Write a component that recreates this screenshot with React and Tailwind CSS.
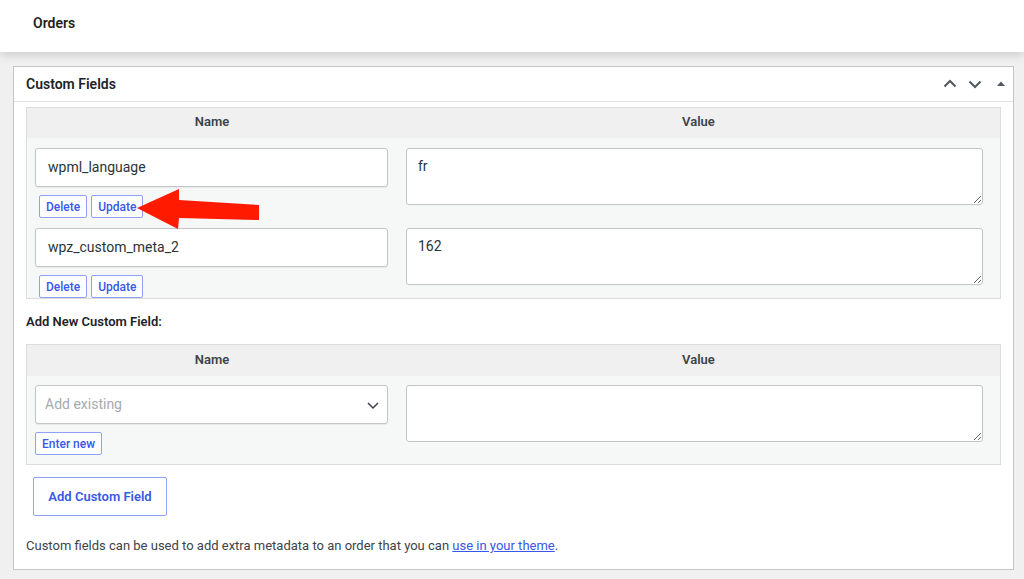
import React from "react";

function Btn({ children, className = "" }) {
  return (
    <button
      className={
        "h-[23px] px-[6px] rounded-[2px] border border-[#8fa0f5] bg-white text-[12px] font-medium text-[#3858e9] leading-none " +
        className
      }
    >
      {children}
    </button>
  );
}

function Chevron({ up }) {
  return (
    <svg width="16" height="16" viewBox="0 0 16 16" fill="none">
      <path
        d={up ? "M2.5 10.5 L8 5 L13.5 10.5" : "M2.5 5.5 L8 11 L13.5 5.5"}
        stroke="#50575e"
        strokeWidth="2"
      />
    </svg>
  );
}

function Row({ name, value }) {
  return (
    <div className="flex pt-[10px]">
      <div className="w-[370px] pl-[8px] pr-[9px] flex flex-col gap-[8px]">
        <div className="h-[39px] border border-[#c3c4c7] rounded-[3px] bg-white shadow-[0_1px_1px_rgba(0,0,0,0.06)] flex items-center pl-[12px] text-[14px] text-[#2c3338]">
          {name}
        </div>
        <div className="flex gap-[4px] pl-[4px]">
          <Btn>Delete</Btn>
          <Btn>Update</Btn>
        </div>
      </div>
      <div className="flex-1 pl-[9px] pr-[17px]">
        <textarea
          readOnly
          defaultValue={value}
          className="block w-full h-[57px] border border-[#c3c4c7] rounded-[3px] bg-white px-[11px] pt-[7px] text-[14px] text-[#2c3338] outline-none"
        />
      </div>
    </div>
  );
}

function TableHead({ tall }) {
  return (
    <div
      className={
        "flex bg-[#f0f0f1] items-center pb-[2px] text-[13px] font-semibold text-[#3c434a] " +
        (tall ? "h-[31px]" : "h-[30px]")
      }
    >
      <div className="w-[370px] text-center">Name</div>
      <div className="flex-1 text-center">Value</div>
    </div>
  );
}

export default function App() {
  return (
    <div
      className="w-[1024px] h-[579px] bg-[#f0f0f1] overflow-hidden"
      style={{ fontFamily: "Roboto, 'Liberation Sans', sans-serif" }}
    >
      <div className="h-[52px] bg-white flex items-center pl-[33px] shadow-[0_2px_10px_rgba(0,0,0,0.18)] relative">
        <span className="text-[14px] font-semibold text-[#1e1e1e] -mt-[6px]">Orders</span>
      </div>
      <div className="ml-[13px] mt-[14px] w-[1001px] h-[504px] bg-white border border-[#c3c4c7] flex flex-col">
        <div className="h-[35px] border-b border-[#e0e0e0] flex items-center pl-[12px] pr-[4px]">
          <span className="text-[14px] font-semibold text-[#1d2327]">Custom Fields</span>
          <div className="ml-auto flex items-center gap-[9px]">
            <Chevron up />
            <Chevron />
            <svg width="16" height="16" viewBox="0 0 16 16" className="ml-[1px]">
              <path d="M4 10 L8 5.5 L12 10 Z" fill="#50575e" />
            </svg>
          </div>
        </div>
        <div className="px-[12px] pt-[5px]">
          <div className="relative border border-[#dcdcde] bg-[#f6f7f7]">
            <TableHead />
            <Row name="wpml_language" value="fr" />
            <Row name="wpz_custom_meta_2" value="162" />
            <svg
              className="absolute left-[110px] top-[81px]"
              width="125"
              height="42"
              viewBox="0 0 125 42"
            >
              <polygon
                points="0,19 42,0 42,11 122,16 122,31 42,29 41,40"
                fill="#ff1a00"
              />
            </svg>
          </div>
          <div className="mt-[15px] text-[13px] font-semibold text-[#1d2327] leading-[16px]">
            Add New Custom Field:
          </div>
          <div className="mt-[14px] border border-[#dcdcde] bg-[#f6f7f7] pb-[9px]">
            <TableHead tall />
            <div className="flex pt-[9px]">
              <div className="w-[370px] pl-[8px] pr-[9px] flex flex-col gap-[8px]">
                <div className="h-[39px] border border-[#c3c4c7] rounded-[3px] bg-white shadow-[0_1px_1px_rgba(0,0,0,0.06)] flex items-center pl-[9px] pr-[6px] text-[14px] text-[#a7aaad]">
                  <span>Add existing</span>
                  <svg className="ml-auto" width="16" height="16" viewBox="0 0 16 16" fill="none">
                    <path d="M3 6 L8 11 L13 6" stroke="#3c434a" strokeWidth="1.5" />
                  </svg>
                </div>
                <div className="flex">
                  <Btn>Enter new</Btn>
                </div>
              </div>
              <div className="flex-1 pl-[9px] pr-[17px]">
                <textarea
                  readOnly
                  className="block w-full h-[57px] border border-[#c3c4c7] rounded-[3px] bg-white outline-none"
                />
              </div>
            </div>
          </div>
          <div className="mt-[12px] pl-[7px] flex">
            <button className="w-[134px] h-[39px] border border-[#8fa0f5] rounded-[2px] bg-white text-[13px] font-semibold text-[#3858e9]">
              Add Custom Field
            </button>
          </div>
          <p className="mt-[22px] text-[13px] text-[#3c434a] leading-[16px]">
            Custom fields can be used to add extra metadata to an order that you can{" "}
            <a className="text-[#3858e9] underline">use in your theme</a>.
          </p>
        </div>
      </div>
    </div>
  );
}
